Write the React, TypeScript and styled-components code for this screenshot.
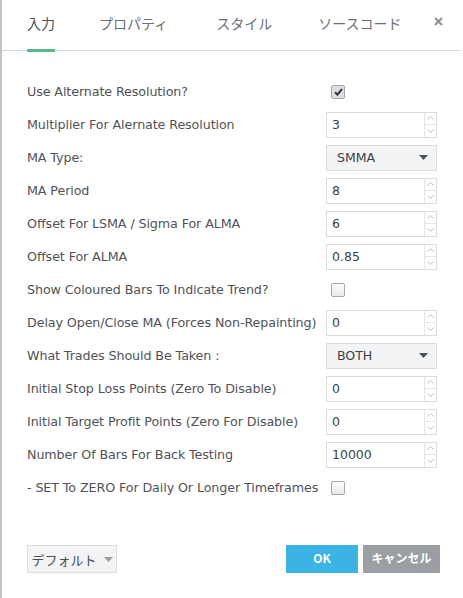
import React from "react";
import styled, { createGlobalStyle } from "styled-components";

const GlobalStyle = createGlobalStyle`
  html, body {
    margin: 0;
    padding: 0;
    background: #ffffff;
  }
  body {
    font-family: "DejaVu Sans", Verdana, "Noto Sans CJK JP", sans-serif;
  }
`;

const Dialog = styled.div`
  width: 461px;
  height: 598px;
  border-left: 2px solid #c4c4c4;
  background: #ffffff;
  display: flex;
  flex-direction: column;
  box-sizing: border-box;
`;

const Header = styled.div`
  height: 51px;
  display: flex;
  align-items: stretch;
  border-bottom: 1px solid #d7d8da;
  padding-left: 25px;
  padding-right: 18px;
  box-sizing: border-box;
`;

const Tab = styled.div<{ $active?: boolean; $gap: number }>`
  display: flex;
  align-items: center;
  margin-right: ${(p) => p.$gap}px;
  font-family: "Noto Sans CJK JP", sans-serif;
  font-size: 14px;
  color: ${(p) => (p.$active ? "#4a4f57" : "#6a6e75")};
  border-bottom: 3px solid ${(p) => (p.$active ? "#53b987" : "transparent")};
  margin-bottom: -2px;
  padding-bottom: 4px;
  box-sizing: border-box;
`;

const Close = styled.div`
  margin-left: auto;
  display: flex;
  align-items: center;
  padding-bottom: 8px;
`;

const Body = styled.div`
  flex: 1;
  padding: 24px 0 0 25px;
  display: flex;
  flex-direction: column;
`;

const Row = styled.div`
  display: flex;
  align-items: center;
  height: 33px;
`;

const Label = styled.div`
  width: 299px;
  font-size: 12.7px;
  color: #4f5257;
  white-space: nowrap;
  letter-spacing: -0.1px;
`;

const NumberBox = styled.div`
  width: 111px;
  height: 26px;
  border: 1px solid #dadde0;
  box-sizing: border-box;
  display: flex;
  background: #fff;
`;

const NumberValue = styled.div`
  flex: 1;
  display: flex;
  align-items: center;
  padding-left: 5px;
  font-size: 12.5px;
  color: #3c3f44;
`;

const Spinner = styled.div`
  width: 11px;
  border-left: 1px solid #e2e4e6;
  display: flex;
  flex-direction: column;
`;

const SpinHalf = styled.div<{ $top?: boolean }>`
  flex: 1;
  display: flex;
  align-items: center;
  justify-content: center;
  border-bottom: ${(p) => (p.$top ? "1px solid #e2e4e6" : "none")};
`;

const SelectBox = styled.div`
  width: 111px;
  height: 26px;
  border: 1px solid #dadde0;
  box-sizing: border-box;
  background: #f2f3f5;
  display: flex;
  align-items: center;
  justify-content: space-between;
  padding: 0 8px 0 10px;
  font-size: 12.5px;
  color: #3c3f44;
`;

const Check = styled.div<{ $checked?: boolean }>`
  width: 12px;
  height: 12px;
  margin-left: 5px;
  border: 1px solid #a4a6aa;
  border-radius: 2px;
  background: ${(p) => (p.$checked ? "#dcdde0" : "linear-gradient(#fdfdfd, #e8e9eb)")};
  display: flex;
  align-items: center;
  justify-content: center;
`;

const Footer = styled.div`
  display: flex;
  align-items: center;
  padding: 0 21px 25px 25px;
  height: 28px;
`;

const DefaultButton = styled.div`
  width: 90px;
  height: 28px;
  box-sizing: border-box;
  border: 1px solid #dadde0;
  background: #f2f3f5;
  display: flex;
  align-items: center;
  justify-content: center;
  gap: 7px;
  font-family: "Noto Sans CJK JP", sans-serif;
  font-size: 13px;
  color: #4a4f57;
`;

const ActionButton = styled.div<{ $bg: string; $w: number }>`
  width: ${(p) => p.$w}px;
  height: 28px;
  background: ${(p) => p.$bg};
  color: #ffffff;
  display: flex;
  align-items: center;
  justify-content: center;
  font-family: "Noto Sans CJK JP", sans-serif;
  font-weight: 700;
  font-size: 12px;
  margin-left: 5px;
  padding-bottom: 3px;
  box-sizing: border-box;
`;

const Spacer = styled.div`
  flex: 1;
`;

type Field =
  | { kind: "check"; label: string; checked: boolean }
  | { kind: "number"; label: string; value: string }
  | { kind: "select"; label: string; value: string };

const fields: Field[] = [
  { kind: "check", label: "Use Alternate Resolution?", checked: true },
  { kind: "number", label: "Multiplier For Alernate Resolution", value: "3" },
  { kind: "select", label: "MA Type:", value: "SMMA" },
  { kind: "number", label: "MA Period", value: "8" },
  { kind: "number", label: "Offset For LSMA / Sigma For ALMA", value: "6" },
  { kind: "number", label: "Offset For ALMA", value: "0.85" },
  { kind: "check", label: "Show Coloured Bars To Indicate Trend?", checked: false },
  { kind: "number", label: "Delay Open/Close MA (Forces Non-Repainting)", value: "0" },
  { kind: "select", label: "What Trades Should Be Taken :", value: "BOTH" },
  { kind: "number", label: "Initial Stop Loss Points (Zero To Disable)", value: "0" },
  { kind: "number", label: "Initial Target Profit Points (Zero For Disable)", value: "0" },
  { kind: "number", label: "Number Of Bars For Back Testing", value: "10000" },
  { kind: "check", label: "- SET To ZERO For Daily Or Longer Timeframes", checked: false },
];

const Caret = ({ color = "#4a4f57" }: { color?: string }) => (
  <svg width="9" height="5" viewBox="0 0 9 5">
    <path d="M0 0 L9 0 L4.5 5 Z" fill={color} />
  </svg>
);

const Chevron = ({ up }: { up?: boolean }) => (
  <svg width="7" height="4" viewBox="0 0 7 4">
    <path
      d={up ? "M0.5 3.5 L3.5 0.5 L6.5 3.5" : "M0.5 0.5 L3.5 3.5 L6.5 0.5"}
      fill="none"
      stroke="#a9c0d6"
      strokeWidth="1"
    />
  </svg>
);

function Control({ field }: { field: Field }) {
  if (field.kind === "check") {
    return (
      <Check $checked={field.checked}>
        {field.checked && (
          <svg width="9" height="8" viewBox="0 0 9 8">
            <path d="M1 4.2 L3.4 6.6 L8 1.2" fill="none" stroke="#2f3135" strokeWidth="2" />
          </svg>
        )}
      </Check>
    );
  }
  if (field.kind === "select") {
    return (
      <SelectBox>
        {field.value}
        <Caret />
      </SelectBox>
    );
  }
  return (
    <NumberBox>
      <NumberValue>{field.value}</NumberValue>
      <Spinner>
        <SpinHalf $top>
          <Chevron up />
        </SpinHalf>
        <SpinHalf>
          <Chevron />
        </SpinHalf>
      </Spinner>
    </NumberBox>
  );
}

export default function App() {
  return (
    <>
      <GlobalStyle />
      <Dialog>
        <Header>
          <Tab $active $gap={44}>入力</Tab>
          <Tab $gap={48}>プロパティ</Tab>
          <Tab $gap={46}>スタイル</Tab>
          <Tab $gap={0}>ソースコード</Tab>
          <Close>
            <svg width="9" height="9" viewBox="0 0 9 9">
              <path d="M1 1 L8 8 M8 1 L1 8" stroke="#8b8f96" strokeWidth="2" />
            </svg>
          </Close>
        </Header>
        <Body>
          {fields.map((f) => (
            <Row key={f.label}>
              <Label>{f.label}</Label>
              <Control field={f} />
            </Row>
          ))}
        </Body>
        <Footer>
          <DefaultButton>
            デフォルト
            <Caret color="#9a9ca0" />
          </DefaultButton>
          <Spacer />
          <ActionButton $bg="#3bb3e4" $w={72}>OK</ActionButton>
          <ActionButton $bg="#9b9ea3" $w={77}>キャンセル</ActionButton>
        </Footer>
      </Dialog>
    </>
  );
}
